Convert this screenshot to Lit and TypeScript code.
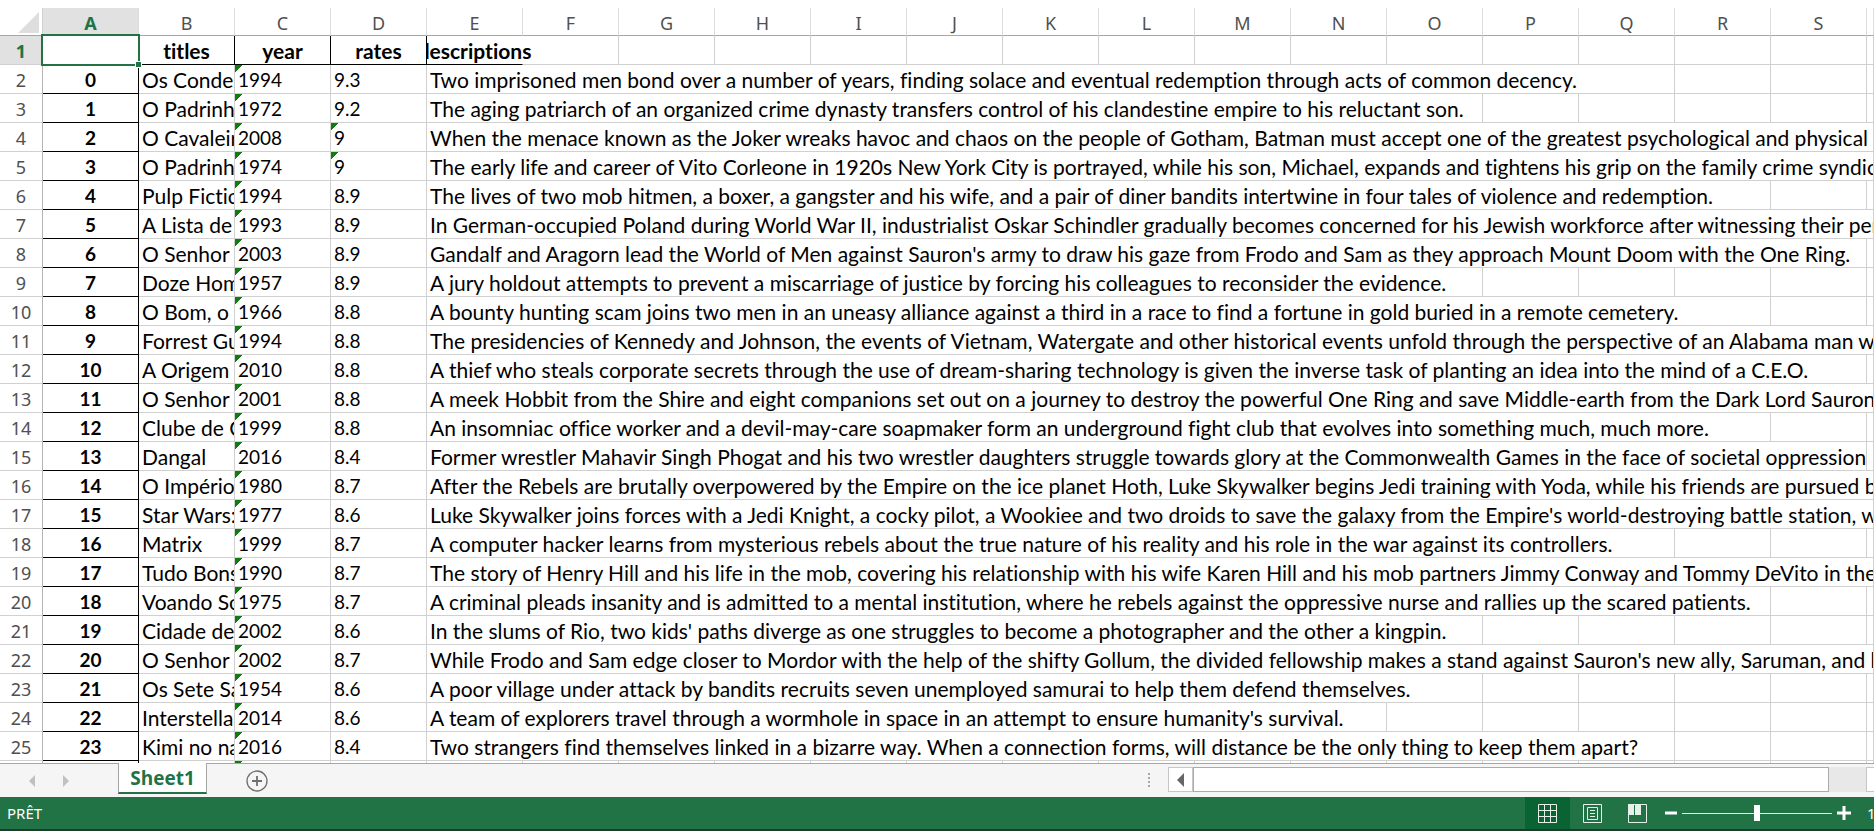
import { LitElement, html, css, svg, nothing } from "lit";
import { customElement, state } from "lit/decorators.js";

interface Film {
  title: string;
  year: string;
  rate: string;
  text: string;
  /** number of columns the description spills over, starting at E */
  span: number;
}

const COLUMNS = "ABCDEFGHIJKLMNOPQRST".split("");
const SPILL_ALL = 16;

const film = (title: string, year: string, rate: string, span: number, text: string): Film => ({
  title, year, rate, span, text,
});

const FILMS: Film[] = [
  film("Os Condenados", "1994", "9.3", 13, "Two imprisoned men bond over a number of years, finding solace and eventual redemption through acts of common decency."),
  film("O Padrinho", "1972", "9.2", 11, "The aging patriarch of an organized crime dynasty transfers control of his clandestine empire to his reluctant son."),
  film("O Cavaleiro", "2008", "9", 16, "When the menace known as the Joker wreaks havoc and chaos on the people of Gotham, Batman must accept one of the greatest psychological and physical tests"),
  film("O Padrinho", "1974", "9", 16, "The early life and career of Vito Corleone in 1920s New York City is portrayed, while his son, Michael, expands and tightens his grip on the family crime syndicate."),
  film("Pulp Fiction", "1994", "8.9", 14, "The lives of two mob hitmen, a boxer, a gangster and his wife, and a pair of diner bandits intertwine in four tales of violence and redemption."),
  film("A Lista de Schindler", "1993", "8.9", 16, "In German-occupied Poland during World War II, industrialist Oskar Schindler gradually becomes concerned for his Jewish workforce after witnessing their persecution"),
  film("O Senhor dos Anéis", "2003", "8.9", 15, "Gandalf and Aragorn lead the World of Men against Sauron's army to draw his gaze from Frodo and Sam as they approach Mount Doom with the One Ring."),
  film("Doze Homens", "1957", "8.9", 11, "A jury holdout attempts to prevent a miscarriage of justice by forcing his colleagues to reconsider the evidence."),
  film("O Bom, o Mau", "1966", "8.8", 14, "A bounty hunting scam joins two men in an uneasy alliance against a third in a race to find a fortune in gold buried in a remote cemetery."),
  film("Forrest Gump", "1994", "8.8", 16, "The presidencies of Kennedy and Johnson, the events of Vietnam, Watergate and other historical events unfold through the perspective of an Alabama man with"),
  film("A Origem", "2010", "8.8", 15, "A thief who steals corporate secrets through the use of dream-sharing technology is given the inverse task of planting an idea into the mind of a C.E.O."),
  film("O Senhor dos Anéis", "2001", "8.8", 16, "A meek Hobbit from the Shire and eight companions set out on a journey to destroy the powerful One Ring and save Middle-earth from the Dark Lord Sauron."),
  film("Clube de Combate", "1999", "8.8", 14, "An insomniac office worker and a devil-may-care soapmaker form an underground fight club that evolves into something much, much more."),
  film("Dangal", "2016", "8.4", 15, "Former wrestler Mahavir Singh Phogat and his two wrestler daughters struggle towards glory at the Commonwealth Games in the face of societal oppression."),
  film("O Império", "1980", "8.7", 16, "After the Rebels are brutally overpowered by the Empire on the ice planet Hoth, Luke Skywalker begins Jedi training with Yoda, while his friends are pursued by"),
  film("Star Wars: Episódio IV", "1977", "8.6", 16, "Luke Skywalker joins forces with a Jedi Knight, a cocky pilot, a Wookiee and two droids to save the galaxy from the Empire's world-destroying battle station, while"),
  film("Matrix", "1999", "8.7", 13, "A computer hacker learns from mysterious rebels about the true nature of his reality and his role in the war against its controllers."),
  film("Tudo Bons Rapazes", "1990", "8.7", 16, "The story of Henry Hill and his life in the mob, covering his relationship with his wife Karen Hill and his mob partners Jimmy Conway and Tommy DeVito in the Italian"),
  film("Voando Sobre", "1975", "8.7", 14, "A criminal pleads insanity and is admitted to a mental institution, where he rebels against the oppressive nurse and rallies up the scared patients."),
  film("Cidade de Deus", "2002", "8.6", 11, "In the slums of Rio, two kids' paths diverge as one struggles to become a photographer and the other a kingpin."),
  film("O Senhor dos Anéis", "2002", "8.7", 16, "While Frodo and Sam edge closer to Mordor with the help of the shifty Gollum, the divided fellowship makes a stand against Sauron's new ally, Saruman, and his"),
  film("Os Sete Samurais", "1954", "8.6", 11, "A poor village under attack by bandits recruits seven unemployed samurai to help them defend themselves."),
  film("Interstellar", "2014", "8.6", 10, "A team of explorers travel through a wormhole in space in an attempt to ensure humanity's survival."),
  film("Kimi no na wa", "2016", "8.4", 13, "Two strangers find themselves linked in a bizarre way. When a connection forms, will distance be the only thing to keep them apart?"),
];

const range = (n: number) => Array.from({ length: n }, (_, i) => i);

@customElement("sheet-grid")
export class SheetGrid extends LitElement {
  static styles = css`
    :host {
      display: block;
      overflow: hidden;
      background: #fff;
      font-family: Lato, "Open Sans", sans-serif;
      font-size: 21px;
      font-variant-ligatures: none;
      line-height: 26px;
      color: #000;
    }
    table {
      width: 100%;
      min-width: 1874px;
      table-layout: fixed;
      border-collapse: separate;
      border-spacing: 0;
      margin-top: 8px;
    }
    .w-head { width: 43px; }
    .w-col { width: 96px; }
    th, td {
      box-sizing: border-box;
      height: 29px;
      padding: 2px 0 0 3px;
      border-right: 1px solid #d0d0d0;
      border-bottom: 1px solid #d0d0d0;
      overflow: hidden;
      white-space: nowrap;
      text-align: left;
      vertical-align: top;
      font-weight: 400;
    }
    .corner, .col, .row {
      padding: 2px 0 0;
      text-align: center;
      color: #505050;
      font-family: "Noto Sans", "Open Sans", sans-serif;
      font-size: 18px;
    }
    .corner, .col {
      height: 28px;
      line-height: 23px;
      border-bottom-color: #a6a6a6;
    }
    .col {
      padding-top: 4px;
      border-right-color: #dcdcdc;
    }
    .triangle {
      display: block;
      margin: 2px 0 0 18px;
      fill: #dedede;
    }
    .row { border-right-color: #b4b4b4; }
    .active {
      background: #e1e1e1;
      color: #217346;
      font-weight: 700;
    }
    .title, .index {
      padding: 2px 0 0;
      text-align: center;
      font-weight: 700;
      border-right-color: #000;
      border-bottom-color: #000;
    }
    .index, .number { font-size: 19px; }
    .spilled {
      overflow: visible;
      clip-path: inset(0 -60px 0 0);
      border-right-color: transparent;
    }
    .spill-text {
      display: flex;
      justify-content: center;
    }
    .selected {
      position: relative;
      overflow: visible;
    }
    .frame {
      position: absolute;
      inset: -2px -2px -2px -2px;
      border: 2px solid #217346;
    }
    .handle {
      position: absolute;
      right: -3px;
      bottom: -3px;
      width: 5px;
      height: 5px;
      background: #217346;
      outline: 1px solid #fff;
    }
    .flagged {
      background: linear-gradient(135deg, #107c10 5px, transparent 5px) no-repeat;
    }
  `;

  private blanks(count: number) {
    return range(count).map(() => html`<td></td>`);
  }

  private filmRow(f: Film, i: number) {
    return html`<tr>
      <th class="row" scope="row">${i + 2}</th>
      <td class="index">${i}</td>
      <td>${f.title}</td>
      <td class="number flagged">${f.year}</td>
      <td class="number ${f.rate.includes(".") ? "" : "flagged"}">${f.rate}</td>
      <td colspan=${f.span}>${f.text}</td>
      ${this.blanks(SPILL_ALL - f.span)}
    </tr>`;
  }

  render() {
    return html`<table>
      <colgroup>
        <col class="w-head" />
        ${range(19).map(() => html`<col class="w-col" />`)}
        <col />
      </colgroup>
      <thead>
        <tr>
          <th class="corner">
            <svg class="triangle" width="21" height="21" viewBox="0 0 21 21" aria-hidden="true">
              <path d="M21 0V21H0Z" />
            </svg>
          </th>
          ${COLUMNS.map((c, i) => html`<th class="col ${i === 0 ? "active" : ""}" scope="col">${i < 19 ? c : nothing}</th>`)}
        </tr>
      </thead>
      <tbody>
        <tr>
          <th class="row active" scope="row">1</th>
          <td class="title selected"><span class="frame"></span><span class="handle"></span></td>
          <td class="title">titles</td>
          <td class="title">year</td>
          <td class="title">rates</td>
          <td class="title spilled"><span class="spill-text">descriptions</span></td>
          ${this.blanks(15)}
        </tr>
        ${FILMS.map((f, i) => this.filmRow(f, i))}
        <tr>
          <th class="row"></th>
          <td class="index"></td>
          <td></td>
          <td class="flagged"></td>
          ${this.blanks(17)}
        </tr>
      </tbody>
    </table>`;
  }
}

@customElement("sheet-tabs")
export class SheetTabs extends LitElement {
  static styles = css`
    :host {
      display: flex;
      height: 34px;
      background: #f5f5f5;
      font-family: "Open Sans", "Noto Sans", sans-serif;
    }
    button {
      display: flex;
      align-items: center;
      justify-content: center;
      padding: 0;
      border: 0;
      background: none;
      font: inherit;
    }
    .left {
      display: flex;
      flex: 1;
      box-sizing: border-box;
      border-top: 1px solid #a6a6a6;
    }
    .nav {
      width: 34px;
      fill: #c0c0c0;
    }
    .arrows {
      display: flex;
      box-sizing: border-box;
      width: 118px;
      padding-left: 15px;
    }
    .tab {
      box-sizing: border-box;
      width: 89px;
      height: 31px;
      margin-top: -1px;
      border: solid #a6a6a6;
      border-width: 0 1px;
      border-bottom: 2px solid #217346;
      background: #fff;
      color: #217346;
      font-size: 19px;
      font-weight: 700;
    }
    .add {
      width: 22px;
      margin-left: 39px;
    }
    .scroll {
      display: flex;
      box-sizing: border-box;
      width: 39%;
      padding: 3px 0 0 3px;
      border-top: 1px solid #a6a6a6;
    }
    .grip {
      width: 6px;
      height: 24px;
      margin-right: 16px;
    }
    .bar {
      display: flex;
      flex: 1;
      height: 25px;
      background: #e8e8e8;
    }
    .step {
      box-sizing: border-box;
      width: 25px;
      border: 1px solid #c6c6c6;
      background: #fff;
      fill: #666;
    }
    .thumb {
      box-sizing: border-box;
      flex: 1;
      margin-right: 37px;
      border: 1px solid #ababab;
      background: #fff;
    }
    .edge {
      width: 8px;
      border-right: 0;
    }
  `;

  render() {
    return html`
      <div class="left">
        <div class="arrows">
          <button class="nav" aria-label="Previous sheet"><svg width="8" height="12" viewBox="0 0 8 12"><path d="M7 0V12L1 6Z" /></svg></button>
          <button class="nav" aria-label="Next sheet"><svg width="8" height="12" viewBox="0 0 8 12"><path d="M1 0V12L7 6Z" /></svg></button>
        </div>
        <button class="tab">Sheet1</button>
        <button class="add" aria-label="New sheet">
          <svg width="22" height="22" viewBox="0 0 22 22" fill="none" stroke="#6e6e6e">
            <circle cx="11" cy="11" r="10" stroke-width="1.3" />
            <path d="M11 6V16M6 11H16" stroke-width="1.8" />
          </svg>
        </button>
      </div>
      <div class="scroll">
        <svg class="grip" viewBox="0 0 6 24" fill="#a8a8a8">
          <path d="M2 6h2v2h-2zM2 10h2v2h-2zM2 14h2v2h-2zM2 18h2v2h-2z" />
        </svg>
        <div class="bar">
          <button class="step" aria-label="Scroll left"><svg width="7" height="14" viewBox="0 0 7 14"><path d="M7 0V14L0 7Z" /></svg></button>
          <div class="thumb"></div>
          <button class="step edge" aria-label="Scroll right"></button>
        </div>
      </div>
    `;
  }
}

const VIEW_ICONS = {
  Normal: svg`<path d="M.5.5H18.5V18.5H.5ZM6.5 0V19M12.5 0V19M0 6.5H19M0 12.5H19" />`,
  "Page layout": svg`<path d="M.5.5H18.5V18.5H.5ZM4.500 3.500H14.500V15.500H4.500ZM7 6.500H12M7 9.500H12M7 12.500H12" />`,
  "Page breaks": svg`<path d="M.5.5H18.5V18.5H.5Z" /><path d="M0 0H6V11H0ZM7 0H13V11H7Z" fill="#e4f0e8" stroke="none" />`,
};

@customElement("status-bar")
export class StatusBar extends LitElement {
  static styles = css`
    :host {
      display: flex;
      height: 32px;
      overflow: hidden;
      border-bottom: 2px solid #1d3b2a;
      background: #217346;
      color: #fff;
      font-family: "Noto Sans", "Open Sans", sans-serif;
      font-size: 15px;
      line-height: 32px;
    }
    .state {
      flex: 1;
      padding-left: 7px;
    }
    button {
      display: flex;
      align-items: center;
      justify-content: center;
      height: 32px;
      padding: 0;
      border: 0;
      background: none;
    }
    .view { width: 45px; }
    .on { background: #0a6332; }
    .less { width: 22px; }
    .more { width: 24px; }
    .zoom {
      appearance: none;
      width: 150px;
      height: 32px;
      margin: 0;
      background: linear-gradient(#e4f0e8, #e4f0e8) center / 100% 1px no-repeat;
    }
    .zoom::-webkit-slider-thumb {
      appearance: none;
      width: 6px;
      height: 16px;
      background: #fff;
    }
    .level {
      width: 7px;
      padding-left: 11px;
      white-space: nowrap;
    }
  `;

  @state() private view = "Normal";

  render() {
    return html`
      <span class="state">PRÊT</span>
      ${Object.entries(VIEW_ICONS).map(
        ([name, icon]) => html`<button
          class="view ${name === this.view ? "on" : ""}"
          aria-label=${name}
          @click=${() => (this.view = name)}
        >
          <svg width="19" height="19" viewBox="0 0 19 19" fill="none" stroke="#e4f0e8">${icon}</svg>
        </button>`,
      )}
      <button class="less" aria-label="Zoom out">
        <svg width="12" height="14" viewBox="0 0 12 14" stroke="#fff" stroke-width="3"><path d="M0 7H12" /></svg>
      </button>
      <input class="zoom" type="range" min="0" max="100" value="50" aria-label="Zoom" />
      <button class="more" aria-label="Zoom in">
        <svg width="14" height="14" viewBox="0 0 14 14" stroke="#fff" stroke-width="3"><path d="M0 7H14M7 0V14" /></svg>
      </button>
      <span class="level">100 %</span>
    `;
  }
}

@customElement("app-root")
export class AppRoot extends LitElement {
  static styles = css`
    :host {
      display: flex;
      flex-direction: column;
      height: 100vh;
      overflow: hidden;
    }
    .grid {
      flex: 1;
      min-height: 0;
    }
  `;

  render() {
    return html`
      <sheet-grid class="grid"></sheet-grid>
      <sheet-tabs></sheet-tabs>
      <status-bar></status-bar>
    `;
  }
}
